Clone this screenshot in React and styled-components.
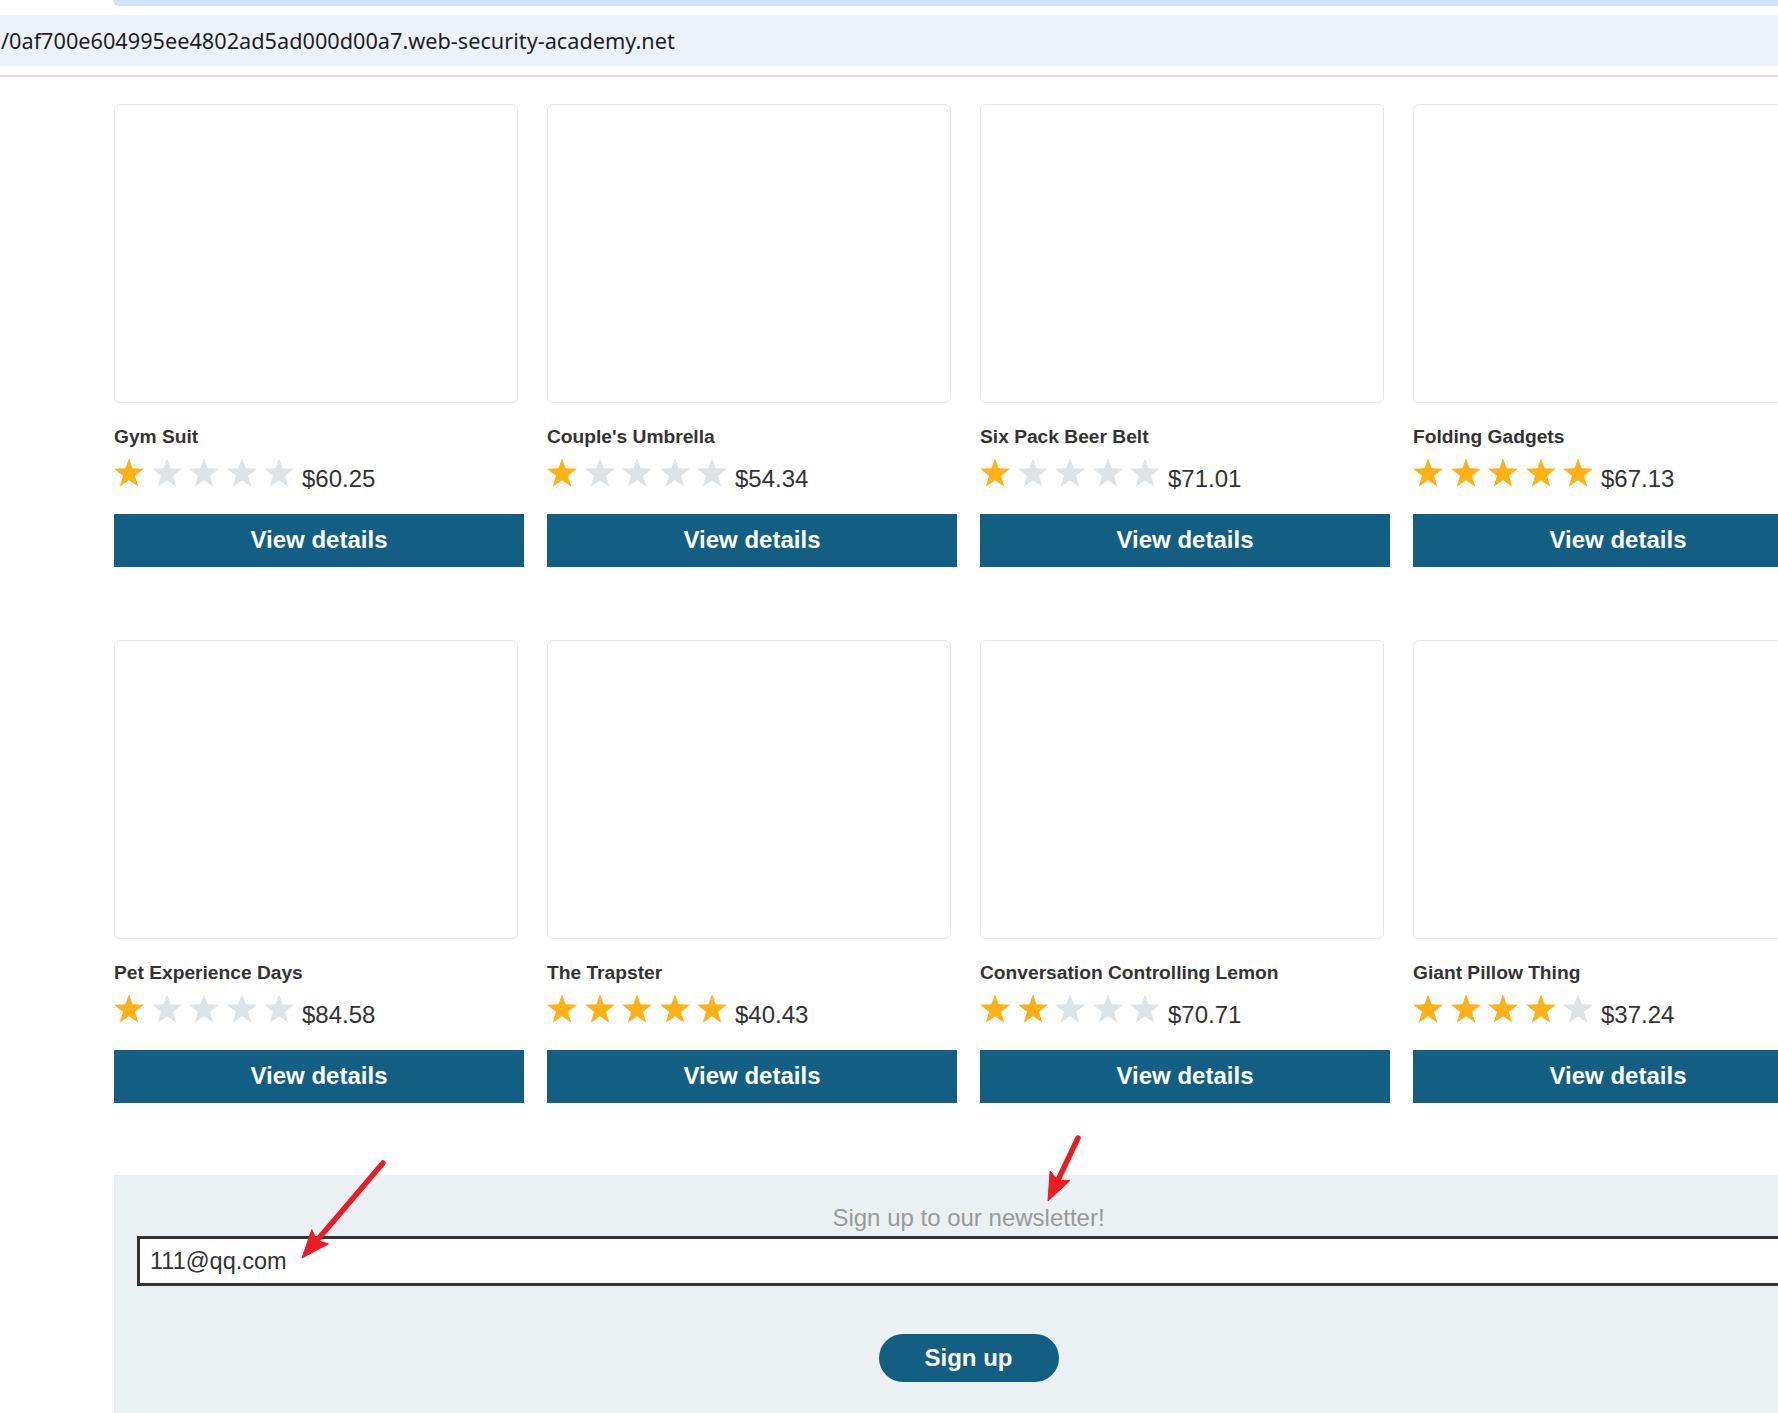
import React from 'react';
import styled, { createGlobalStyle } from 'styled-components';

const GlobalStyle = createGlobalStyle`
  html, body {
    margin: 0;
    padding: 0;
    background: #fff;
    overflow: hidden;
  }
  body {
    font-family: "Liberation Sans", Arial, sans-serif;
  }
`;

const Screen = styled.div`
  position: relative;
  width: 1778px;
  height: 1413px;
  overflow: hidden;
`;

const TabStrip = styled.div`
  height: 15px;
`;

const TabEdge = styled.div`
  margin-left: 113px;
  height: 6px;
  background: #d3e3fd;
  border-bottom-left-radius: 6px;
`;

const AddressBar = styled.div`
  height: 51px;
  background: #edf2fa;
  display: flex;
  align-items: center;
  font-family: "Noto Sans", sans-serif;
  font-size: 21.7px;
  color: #1f1f1f;
  white-space: nowrap;
`;

const Url = styled.span`
  margin-left: 1px;
`;

const Divider = styled.div`
  margin-top: 9px;
  height: 2px;
  background: #dfdfdf;
`;

const Page = styled.main`
  padding: 27px 0 0 114px;
`;

const Container = styled.div`
  width: 1709px;
`;

const Grid = styled.section`
  display: grid;
  grid-template-columns: repeat(4, 410px);
  column-gap: 23px;
  row-gap: 73px;
`;

const Card = styled.div`
  display: flex;
  flex-direction: column;
`;

const ImageBox = styled.div`
  width: 404px;
  height: 299px;
  box-sizing: border-box;
  border: 1px solid #e7e7e7;
  border-radius: 6px;
  background: #fff;
`;

const Title = styled.h3`
  margin: 23px 0 0;
  font-size: 19.2px;
  line-height: 22px;
  font-weight: bold;
  color: #333;
`;

const RatingRow = styled.div`
  display: flex;
  align-items: baseline;
  gap: 8px;
  margin-top: 9.5px;
`;

const Stars = styled.div`
  display: flex;
  gap: 7.5px;
`;

const Price = styled.span`
  font-size: 24px;
  line-height: 24px;
  color: #333;
`;

const DetailsButton = styled.button`
  margin-top: 23px;
  height: 53.5px;
  width: 100%;
  border: none;
  background: #125f83;
  color: #fff;
  font-family: "Liberation Sans", Arial, sans-serif;
  font-size: 24px;
  font-weight: bold;
  padding: 0;
`;

const Newsletter = styled.section`
  margin-top: 72px;
  background: #ebf0f2;
  padding: 31px 23px 80px;
  text-align: center;
`;

const NewsHeading = styled.h4`
  margin: 0 0 6px;
  font-size: 24px;
  line-height: 24px;
  font-weight: normal;
  color: #999;
`;

const EmailInput = styled.input`
  display: block;
  width: 100%;
  height: 50px;
  box-sizing: border-box;
  border: 3px solid #333;
  padding: 0 10px;
  font-family: "Liberation Sans", Arial, sans-serif;
  font-size: 23.5px;
  color: #333;
  background: #fff;
  outline: none;
`;

const SignUpButton = styled.button`
  margin-top: 48px;
  width: 180px;
  height: 48px;
  border: none;
  border-radius: 24px;
  background: #125f83;
  color: #fff;
  font-family: "Liberation Sans", Arial, sans-serif;
  font-size: 24px;
  font-weight: bold;
  padding: 0;
`;

const Annotations = styled.svg`
  position: absolute;
  left: 0;
  top: 0;
  pointer-events: none;
`;

const products = [
  { name: 'Gym Suit', rating: 1, price: '$60.25' },
  { name: "Couple's Umbrella", rating: 1, price: '$54.34' },
  { name: 'Six Pack Beer Belt', rating: 1, price: '$71.01' },
  { name: 'Folding Gadgets', rating: 5, price: '$67.13' },
  { name: 'Pet Experience Days', rating: 1, price: '$84.58' },
  { name: 'The Trapster', rating: 5, price: '$40.43' },
  { name: 'Conversation Controlling Lemon', rating: 2, price: '$70.71' },
  { name: 'Giant Pillow Thing', rating: 4, price: '$37.24' },
];

const Star = ({ on }) => (
  <svg width="30" height="29" viewBox="1.5 1.5 21 20.1">
    <polygon
      points="12,1.5 14.5,8.6 22.5,8.9 16.2,13.8 18.5,21.6 12,17 5.5,21.6 7.8,13.8 1.5,8.9 9.5,8.6"
      fill={on ? '#ffb116' : '#dde3e6'}
    />
  </svg>
);

const Rating = ({ value }) => (
  <Stars>
    {[1, 2, 3, 4, 5].map(i => (
      <Star key={i} on={i <= value} />
    ))}
  </Stars>
);

// red arrow drawn from start point to tip
const Arrow = ({ x1, y1, x2, y2 }) => {
  const dx = x2 - x1;
  const dy = y2 - y1;
  const len = Math.sqrt(dx * dx + dy * dy);
  const ux = dx / len;
  const uy = dy / len;
  const bx = x2 - ux * 28;
  const by = y2 - uy * 28;
  const px = -uy;
  const py = ux;
  const w = 11;
  const head = [
    [x2, y2],
    [bx + px * w, by + py * w],
    [bx + ux * 5, by + uy * 5],
    [bx - px * w, by - py * w],
  ]
    .map(p => p.join(','))
    .join(' ');
  return (
    <g fill="#ed1c24" stroke="#ed1c24">
      <line x1={x1} y1={y1} x2={bx + ux * 6} y2={by + uy * 6} strokeWidth="5.5" strokeLinecap="round" />
      <polygon points={head} strokeWidth="1" strokeLinejoin="round" />
    </g>
  );
};

export default function App() {
  return (
    <Screen>
      <GlobalStyle />
      <TabStrip>
        <TabEdge />
      </TabStrip>
      <AddressBar>
        <Url>/0af700e604995ee4802ad5ad000d00a7.web-security-academy.net</Url>
      </AddressBar>
      <Divider />
      <Page>
        <Container>
          <Grid>
            {products.map(p => (
              <Card key={p.name}>
                <ImageBox />
                <Title>{p.name}</Title>
                <RatingRow>
                  <Rating value={p.rating} />
                  <Price>{p.price}</Price>
                </RatingRow>
                <DetailsButton>View details</DetailsButton>
              </Card>
            ))}
          </Grid>
          <Newsletter>
            <NewsHeading>Sign up to our newsletter!</NewsHeading>
            <EmailInput defaultValue="111@qq.com" />
            <SignUpButton>Sign up</SignUpButton>
          </Newsletter>
        </Container>
      </Page>
      <Annotations width="1778" height="1413">
        <Arrow x1={383} y1={1163} x2={302} y2={1258} />
        <Arrow x1={1078} y1={1138} x2={1048} y2={1201} />
      </Annotations>
    </Screen>
  );
}
